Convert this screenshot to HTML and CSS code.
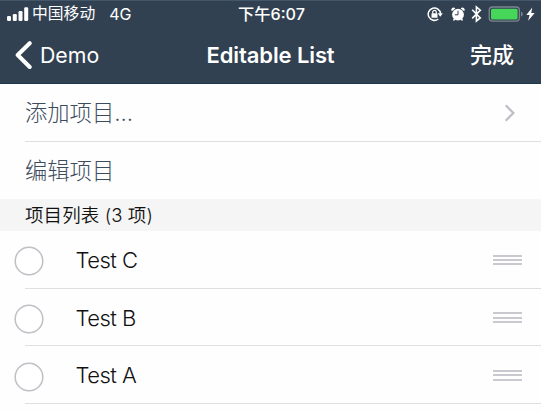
FILE: index.html
```html
<!DOCTYPE html>
<html lang="zh-CN">
<head>
<meta charset="utf-8">
<title>Editable List</title>
<link rel="stylesheet" href="styles.css">
</head>
<body>
<header class="header">
  <div class="status">
    <div class="status-left">
      <svg class="signal" width="22" height="14" viewBox="0 0 22 14" fill="#fff"><rect x="0" y="9" width="4" height="5" rx="1.2"/><rect x="5.8" y="7" width="4" height="7" rx="1.2"/><rect x="11.5" y="4" width="4" height="10" rx="1.2"/><rect x="17.2" y="0.3" width="4" height="13.7" rx="1.2"/></svg>
      <span class="carrier">中国移动</span>
      <span class="network">4G</span>
    </div>
    <span class="clock">下午6:07</span>
    <svg class="indicators" width="114" height="20" viewBox="427 3 114 20">
      <g fill="none" stroke="#fff" stroke-width="1.5">
        <path d="M438.3 18A6.2 6.2 0 1 1 440.6 12.6"/>
        <path d="M432.7 12.5v-1.3a1.8 1.8 0 0 1 3.6 0v1.3" stroke-width="1.2"/>
        <path d="M472.2 8.7L480.3 16.9L476.4 20V6L480.3 9.2L472.2 17.4" stroke-width="1.6"/>
      </g>
      <g fill="#fff">
        <rect x="431.5" y="12.2" width="6" height="4.6" rx=".6"/>
        <path d="M437.6 12.3h5.2l-2.5 3.4z"/>
        <circle cx="458" cy="13.6" r="5.9"/>
        <path d="M451.8 10.2a2.2 2.2 0 0 1 3.5-2.8zM464.2 10.2a2.2 2.2 0 0 0-3.5-2.8zM454.2 17l1.4 1.3-1.6 1.6-1-1zM461.8 17l-1.4 1.3 1.6 1.6 1-1z"/>
        <path d="M532.3 6.5L526.3 13.9h3.3l-1.5 5.9 6.6-7.8h-3.5z"/>
      </g>
      <path d="M458 9.8v4h-3.2" fill="none" stroke="#324152" stroke-width="1"/>
      <rect x="489.2" y="6" width="30.2" height="14.2" rx="3.4" fill="none" stroke="#7b8590" stroke-width="1.3"/>
      <path d="M521 10.5q1.8.8 1.8 2.6t-1.8 2.6z" fill="#7b8590"/>
      <rect x="491" y="7.8" width="26.6" height="10.6" rx="1.5" fill="#45d65a"/>
    </svg>
  </div>
  <nav class="nav">
    <div class="back">
      <svg width="18" height="30" viewBox="0 0 18 30" fill="none" stroke="#fff" stroke-width="4" stroke-linecap="round" stroke-linejoin="round"><path d="M15.7 3.2L3.7 15l12 12"/></svg>
      <span class="back-label">Demo</span>
    </div>
    <h1 class="title">Editable List</h1>
    <span class="done">完成</span>
  </nav>
</header>
<main>
  <div class="row action divided">
    <span class="action-label">添加项目...</span>
    <svg class="chevron" width="12" height="18" viewBox="0 0 12 18" fill="none" stroke="#bebec4" stroke-width="2.2"><path d="M1.7 1.3L9.4 9l-7.7 7.7"/></svg>
  </div>
  <div class="row action"><span class="action-label">编辑项目</span></div>
  <h2 class="section">项目列表 (3 项)</h2>
  <div class="row item divided"><svg class="radio" width="30" height="30" viewBox="0 0 30 30"><circle cx="15" cy="15" r="13.8"/></svg><span class="name">Test C</span><span class="handle"><i></i><i></i><i></i></span></div>
  <div class="row item divided"><svg class="radio" width="30" height="30" viewBox="0 0 30 30"><circle cx="15" cy="15" r="13.8"/></svg><span class="name">Test B</span><span class="handle"><i></i><i></i><i></i></span></div>
  <div class="row item divided"><svg class="radio" width="30" height="30" viewBox="0 0 30 30"><circle cx="15" cy="15" r="13.8"/></svg><span class="name">Test A</span><span class="handle"><i></i><i></i><i></i></span></div>
</main>
</body>
</html>
```
FILE: styles.css
```css
* { box-sizing: border-box; }
body {
  margin: 0;
  height: 413px;
  overflow: hidden;
  background: #fefefe;
  color: #111;
  font-family: Inter, "Noto Sans CJK SC", sans-serif;
  white-space: nowrap;
}
svg { display: block; flex: none; }
.header {
  height: 84px;
  background: #324152;
  border-top: 1px solid #44576a;
  border-bottom: 1px solid #20384e;
  color: #fff;
}
.status {
  display: grid;
  grid-template-columns: 1fr auto 1fr;
  height: 26px;
  align-items: center;
  font-size: 15.8px;
  line-height: 26px;
}
.status-left { display: flex; align-items: center; padding-left: 7px; }
.carrier { margin-left: 3px; }
.network { margin-left: 14px; font-size: 16px; }
.clock { padding-left: 2px; font-size: 16.2px; font-weight: 500; }
.indicators { justify-self: end; }
.nav {
  display: grid;
  grid-template-columns: 1fr auto 1fr;
  height: 56px;
  align-items: center;
  line-height: 56px;
}
.back { display: flex; align-items: center; padding-left: 14px; }
.back-label { margin-left: 8px; font-size: 21.3px; }
.title { margin: 0; font-size: 22px; font-weight: 600; letter-spacing: -0.1px; }
.done { justify-self: end; padding-right: 27px; font-size: 22px; font-weight: 500; }
.row { position: relative; display: flex; align-items: center; height: 57.6px; }
.divided::after {
  content: "";
  position: absolute;
  left: 25px;
  right: 0;
  bottom: 0;
  height: 1px;
  background: #dfdfe1;
}
.action {
  justify-content: space-between;
  padding: 0 25px;
  color: #3d4c5d;
  font-size: 22.3px;
  font-weight: 300;
}
.action-label { padding-bottom: 3px; }
.section {
  height: 32px;
  margin: 0;
  padding: 0 0 0 25px;
  background: #f5f5f5;
  font-size: 18.5px;
  font-weight: 350;
  letter-spacing: 0.1px;
  line-height: 32px;
}
.item { padding: 0 19px 0 14px; }
.radio { margin-top: 3px; fill: #fff; stroke: #bfbfc6; stroke-width: 1.5; }
.name { margin-left: 31.5px; font-size: 22px; font-weight: 300; letter-spacing: -0.5px; }
.handle { display: flex; flex-direction: column; gap: 2.4px; margin-left: auto; }
.handle i { width: 29px; height: 2px; background: #c9c9cf; }
```
